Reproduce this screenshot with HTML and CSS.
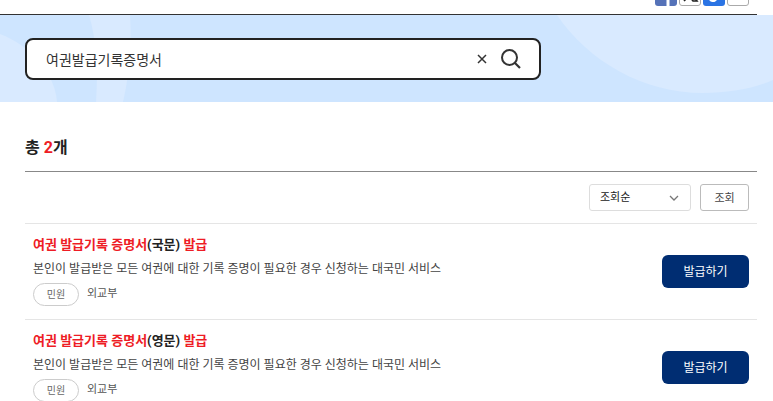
FILE: index.html
```
<!DOCTYPE html>
<html lang="ko">

<head>
    <meta charset="UTF-8">
    <meta name="viewport" content="width=device-width, initial-scale=1.0">
    <title>통합검색</title>
    <link rel="stylesheet" href="styles.css">
</head>

<body>
    <header class="top">
        <div class="share">
            <a href="#" class="sns facebook" aria-label="페이스북">
                <svg width="22" height="22" viewBox="0 0 22 22"><path d="M13 22V13H10V10H13V8Q13 4 18 4" fill="none" stroke="#fff" stroke-width="3" /></svg>
            </a>
            <a href="#" class="sns" aria-label="엑스">
                <svg width="20" height="20" viewBox="0 0 20 20"><path d="M4 4L13 16H17L8 4ZM16 4L4 16" fill="none" stroke="#222" stroke-width="1.6" /></svg>
            </a>
            <a href="#" class="sns band" aria-label="밴드">
                <svg width="22" height="22" viewBox="0 0 22 22"><path d="M7 5V13A3 3 0 0 0 13 14" fill="none" stroke="#fff" stroke-width="3" /></svg>
            </a>
            <a href="#" class="sns" aria-label="인쇄">
                <svg width="20" height="20" viewBox="0 0 20 20"><path d="M6 14H14" stroke="#999" stroke-width="1.5" /></svg>
            </a>
        </div>
    </header>

    <section class="banner">
        <svg class="banner-bg" width="100%" height="87" aria-hidden="true">
            <path d="M0 19C30 30 55 58 57 87H0Z" fill="#d9eaff" />
            <path d="M89 0H130C132 30 129 62 123 87H96C98 58 97 26 89 0Z" fill="#d9eaff" />
            <svg x="100%" width="1" height="87" overflow="visible">
                <path d="M-216 0C-185 46 -130 78 -70 78C-44 78 -20 74 0 65V0Z" fill="#d9eaff" />
            </svg>
        </svg>
        <form class="search">
            <input type="text" class="search-input" value="여권발급기록증명서" aria-label="검색어">
            <button type="reset" class="icon-btn" aria-label="지우기">
                <svg width="10" height="10" viewBox="0 0 10 10"><path d="M1 1L9 9M9 1L1 9" stroke="#333" stroke-width="1.5" /></svg>
            </button>
            <button type="submit" class="icon-btn" aria-label="검색">
                <svg width="20" height="20" viewBox="0 0 20 20"><circle cx="8.5" cy="8.5" r="7.5" fill="none" stroke="#333" stroke-width="2" /><path d="M14 14L19 19" stroke="#333" stroke-width="2.2" /></svg>
            </button>
        </form>
    </section>

    <main class="content">
        <h2 class="total">총 <em>2</em>개</h2>
        <div class="sort">
            <div class="select-wrap">
                <select class="select" aria-label="정렬">
                    <option>조회순</option>
                    <option>이름순</option>
                </select>
                <svg class="arrow" width="10" height="6" viewBox="0 0 10 6"><path d="M1 1L5 5L9 1" fill="none" stroke="#777" stroke-width="1.3" /></svg>
            </div>
            <button type="button" class="sort-btn">조회</button>
        </div>
        <ul class="list">
            <li class="item">
                <div class="text">
                    <a href="#" class="title"><em>여권 발급기록 증명서</em>(국문) <em>발급</em></a>
                    <p class="desc">본인이 발급받은 모든 여권에 대한 기록 증명이 필요한 경우 신청하는 대국민 서비스</p>
                    <div class="info"><span class="tag">민원</span><span>외교부</span></div>
                </div>
                <button type="button" class="issue">발급하기</button>
            </li>
            <li class="item">
                <div class="text">
                    <a href="#" class="title"><em>여권 발급기록 증명서</em>(영문) <em>발급</em></a>
                    <p class="desc">본인이 발급받은 모든 여권에 대한 기록 증명이 필요한 경우 신청하는 대국민 서비스</p>
                    <div class="info"><span class="tag">민원</span><span>외교부</span></div>
                </div>
                <button type="button" class="issue">발급하기</button>
            </li>
        </ul>
    </main>
</body>

</html>
```
FILE: styles.css
```
* {
    box-sizing: border-box;
}

body {
    margin: 0;
    overflow: hidden;
    background: #fff;
    color: #222;
    font-family: Roboto, "Noto Sans CJK KR", sans-serif;
    font-size: 11px;
}

input,
select,
button {
    font-family: inherit;
    color: inherit;
}

button {
    padding: 0;
    cursor: pointer;
}

em {
    color: #ee1c25;
    font-style: normal;
}

.top {
    display: flex;
    justify-content: flex-end;
    align-items: flex-end;
    height: 15px;
    margin-right: 16px;
    padding: 0 8px 8px 0;
    border-bottom: 1px solid #333;
}

.share {
    display: flex;
    gap: 2px;
}

.sns {
    display: flex;
    justify-content: center;
    align-items: center;
    width: 22px;
    height: 22px;
    border: 1px solid #aaa;
    border-radius: 3px;
    background: #fff;
}

.facebook {
    border: 0;
    background: #5572b8;
}

.band {
    border: 0;
    background: #2b74e4;
}

.banner {
    position: relative;
    padding: 23px 25px 22px;
    background: #cee5ff;
}

.banner-bg {
    position: absolute;
    top: 0;
    left: 0;
}

.search {
    position: relative;
    display: flex;
    align-items: center;
    gap: 14px;
    max-width: 516px;
    height: 42px;
    padding: 0 18px 0 19px;
    border: 2px solid #222;
    border-radius: 8px;
    background: #fff;
}

.search-input {
    flex: 1;
    min-width: 0;
    padding: 0;
    border: 0;
    outline: 0;
    background: none;
    color: #333;
    font-size: 14px;
}

.icon-btn {
    display: flex;
    border: 0;
    background: none;
}

.content {
    padding: 33px 16px 0 25px;
}

.total {
    margin: 0;
    padding-bottom: 11px;
    border-bottom: 1px solid #888;
    font-size: 16px;
    line-height: 25px;
}

.sort {
    display: flex;
    justify-content: flex-end;
    gap: 9px;
    padding: 12px 8px;
}

.select-wrap {
    position: relative;
}

.select {
    width: 102px;
    height: 27px;
    padding: 0 10px;
    border: 1px solid #ddd;
    border-radius: 3px;
    background: #fff;
    appearance: none;
    font-size: 11px;
}

.arrow {
    position: absolute;
    top: 11px;
    right: 12px;
    pointer-events: none;
}

.sort-btn {
    width: 49px;
    height: 27px;
    padding-bottom: 2px;
    border: 1px solid #bbb;
    border-radius: 3px;
    background: #fff;
    color: #444;
    font-size: 11px;
}

.list {
    margin: 0;
    padding: 0;
    list-style: none;
}

.item {
    display: flex;
    justify-content: space-between;
    align-items: center;
    height: 96px;
    padding: 0 8px;
    border-top: 1px solid #e5e5e5;
}

.text {
    padding-bottom: 3px;
}

.title {
    display: block;
    margin-bottom: 2px;
    color: #222;
    font-size: 13px;
    font-weight: bold;
    line-height: 22px;
    text-decoration: none;
}

.desc {
    margin: 0;
    color: #444;
    font-size: 12px;
    line-height: 22px;
}

.info {
    display: flex;
    align-items: center;
    gap: 8px;
    margin-top: 3px;
    color: #555;
    line-height: 21px;
}

.info span:last-child {
    padding-bottom: 2px;
}

.tag {
    width: 46px;
    border: 1px solid #ccc;
    border-radius: 12px;
    color: #666;
    font-size: 10px;
    text-align: center;
}

.issue {
    width: 87px;
    height: 33px;
    padding-bottom: 2px;
    border: 0;
    border-radius: 6px;
    background: #002d72;
    color: #fff;
    font-size: 12px;
}
```
